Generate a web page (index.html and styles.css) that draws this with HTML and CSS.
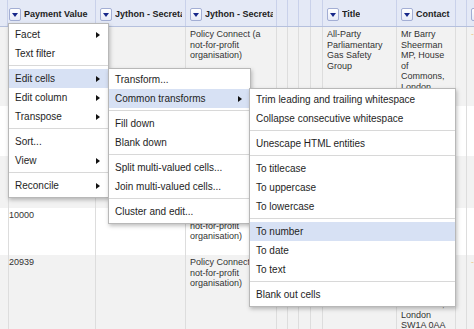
FILE: index.html
```html
<!DOCTYPE html>
<html lang="en">
<head>
    <meta charset="UTF-8">
    <meta name="viewport" content="width=device-width, initial-scale=1.0">
    <title>Edit cells menu</title>

    <link rel="stylesheet" href="styles.css">
</head>


<body>
    <div class="sheet">
        <div class="row head">
            <div></div>
            <div><span class="drop"></span><span class="label">Payment Value</span></div>
            <div><span class="drop"></span><span class="label">Jython - Secreta</span></div>
            <div><span class="drop"></span><span class="label">Jython - Secreta</span></div>
            <div></div>
            <div></div>
            <div></div>
            <div></div>
            <div><span class="drop"></span><span class="label">Title</span></div>
            <div><span class="drop"></span><span class="label">Contact</span></div>
            <div></div>
            <div><span class="drop"></span></div>
        </div>

        <div class="row shade row-a">
            <div></div>
            <div></div>
            <div></div>
            <div>Policy Connect (a<br>not-for-profit<br>organisation)</div>
            <div></div>
            <div></div>
            <div></div>
            <div></div>
            <div>All-Party<br>Parliamentary<br>Gas Safety<br>Group</div>
            <div>Mr Barry<br>Sheerman<br>MP, House<br>of<br>Commons,<br>London</div>
            <div></div>
            <div><span class="flag">-</span></div>
        </div>

        <div class="row row-b">
            <div></div>
            <div></div>
            <div></div>
            <div></div>
            <div></div>
            <div></div>
            <div></div>
            <div></div>
            <div></div>
            <div></div>
            <div></div>
            <div></div>
        </div>

        <div class="row shade row-b2">
            <div></div>
            <div></div>
            <div></div>
            <div></div>
            <div></div>
            <div></div>
            <div></div>
            <div></div>
            <div></div>
            <div></div>
            <div></div>
            <div></div>
        </div>

        <div class="row row-c">
            <div></div>
            <div>10000</div>
            <div></div>
            <div>Policy Connect (a<br>not-for-profit<br>organisation)</div>
            <div></div>
            <div></div>
            <div></div>
            <div></div>
            <div></div>
            <div></div>
            <div></div>
            <div></div>
        </div>

        <div class="row shade row-d">
            <div></div>
            <div>20939</div>
            <div></div>
            <div>Policy Connect (a<br>not-for-profit<br>organisation)</div>
            <div></div>
            <div></div>
            <div></div>
            <div></div>
            <div></div>
            <div>Mr Barry<br>Sheerman<br>MP, House<br>of<br>Commons,<br>London<br>SW1A 0AA</div>
            <div></div>
            <div><span class="flag">-</span></div>
        </div>
    </div>

    <div class="menu m-column">
        <div class="item sub">Facet</div>
        <div class="item">Text filter</div>
        <div class="sep"></div>
        <div class="item sub on">Edit cells</div>
        <div class="item sub">Edit column</div>
        <div class="item sub">Transpose</div>
        <div class="sep"></div>
        <div class="item">Sort...</div>
        <div class="item sub">View</div>
        <div class="sep"></div>
        <div class="item sub">Reconcile</div>
    </div>

    <div class="menu m-edit">
        <div class="item">Transform...</div>
        <div class="item sub on">Common transforms</div>
        <div class="sep"></div>
        <div class="item">Fill down</div>
        <div class="item">Blank down</div>
        <div class="sep"></div>
        <div class="item">Split multi-valued cells...</div>
        <div class="item">Join multi-valued cells...</div>
        <div class="sep"></div>
        <div class="item">Cluster and edit...</div>
    </div>

    <div class="menu m-common">
        <div class="item">Trim leading and trailing whitespace</div>
        <div class="item">Collapse consecutive whitespace</div>
        <div class="sep"></div>
        <div class="item">Unescape HTML entities</div>
        <div class="sep"></div>
        <div class="item">To titlecase</div>
        <div class="item">To uppercase</div>
        <div class="item">To lowercase</div>
        <div class="sep"></div>
        <div class="item on">To number</div>
        <div class="item">To date</div>
        <div class="item">To text</div>
        <div class="sep"></div>
        <div class="item">Blank out cells</div>
    </div>
</body>
</html>
```

FILE: styles.css
```css
body{
    margin: 0;
    font-family: "Liberation Sans", Arial, sans-serif;
    background-color: white;
    overflow: hidden;
}

.sheet{
    width: 474px;
    overflow: hidden;
}

.row{
    display: grid;
    grid-template-columns: 5px 91px 90px 91px 11px 11px 12px 12px 74px 59px 11px 1fr;
    background-color: white;
}

.row > div{
    border-right: 1px solid #dddddd;
    padding: 2px 4px 0;
    font-size: 9px;
    line-height: 10.5px;
    color: #333;
    white-space: nowrap;
    overflow: hidden;
}

.shade{
    background-color: #f2f2f2;
}

.row-a{ height: 79px; }
.row-b{ height: 50px; }
.row-b2{ height: 52px; }
.row-c{ height: 47px; }
.row-d{ height: 80px; }

.head{
    height: 27px;
    box-sizing: border-box;
    background-color: #e4e9f6;
    border-bottom: 1px solid #b5c0dd;
}

.head > div{
    display: flex;
    align-items: center;
    padding: 3px 3px 0 4px;
    border-right-color: #c9d1ea;
    font-weight: bold;
    color: #222;
}

.drop{
    flex: none;
    width: 12px;
    height: 13px;
    box-sizing: border-box;
    margin-right: 3px;
    border: 1px solid #a3aed4;
    border-radius: 2px;
    background: linear-gradient(#ffffff, #e6eaf7);
    display: flex;
    align-items: center;
    justify-content: center;
}

.drop::after{
    content: "";
    border-top: 4px solid #17278a;
    border-left: 3px solid transparent;
    border-right: 3px solid transparent;
}

.label{
    overflow: hidden;
}

.flag{
    color: #eec98a;
}

.menu{
    position: absolute;
    box-sizing: border-box;
    padding: 1px 0 2px;
    background-color: white;
    border: 1px solid #b8b8b8;
    box-shadow: 1px 2px 4px rgba(0, 0, 0, 0.25);
    font-size: 10px;
    color: #1e1e1e;
}

.m-column{ left: 8px; top: 23px; width: 101px; }
.m-edit{ left: 108px; top: 68px; width: 143px; }
.m-common{ left: 249px; top: 88px; width: 207px; }

.item{
    height: 19px;
    line-height: 19px;
    padding: 0 8px 0 6px;
    display: flex;
    justify-content: space-between;
    align-items: center;
    white-space: nowrap;
}

.sub::after{
    content: "";
    border-left: 4px solid #111;
    border-top: 3.5px solid transparent;
    border-bottom: 3.5px solid transparent;
}

.on{
    background-color: #d7e1f4;
}

.sep{
    margin: 2px 0 3px;
    border-top: 1px solid #d8d8d8;
}
```
